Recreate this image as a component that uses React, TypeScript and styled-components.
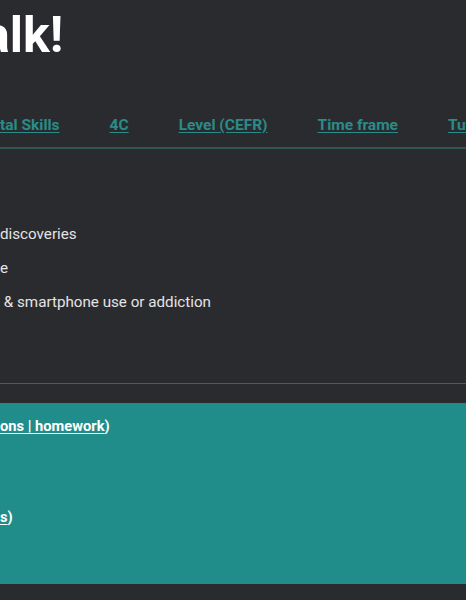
import React from "react";
import styled, { createGlobalStyle } from "styled-components";

const Global = createGlobalStyle`
  html, body { margin: 0; padding: 0; background: #2a2b2f; }
  body { font-family: Roboto, "Noto Sans", Arial, sans-serif; overflow: hidden; width: 466px; height: 600px; }
`;

const Page = styled.div`
  width: 466px;
  height: 600px;
  overflow: hidden;
  background: #2a2b2f;
  display: flex;
  flex-direction: column;
`;

const Title = styled.h1`
  margin: 0;
  padding-top: 7px;
  height: 60px;
  font-size: 50px;
  line-height: 56px;
  font-weight: 700;
  color: #ffffff;
  white-space: nowrap;
  text-indent: -17px;
`;

const Nav = styled.nav`
  display: flex;
  gap: 50px;
  margin-top: 42px;
  padding-top: 6px;
  height: 32px;
  white-space: nowrap;
  border-bottom: 2px solid #2d5755;
`;

const NavLink = styled.a`
  font-size: 15.5px;
  font-weight: 700;
  line-height: 20px;
  color: #2a8c88;
  text-decoration: underline;
  text-underline-offset: 2px;
  flex: none;
`;

const List = styled.ul`
  list-style: none;
  margin: 75px 0 0 0;
  padding: 0;
  display: flex;
  flex-direction: column;
  gap: 14px;
`;

const Item = styled.li<{ $indent: number }>`
  font-size: 15.2px;
  line-height: 20px;
  color: #e4e4e4;
  white-space: nowrap;
  text-indent: ${(p) => p.$indent}px;
`;

const Divider = styled.hr`
  margin: 71px 0 0 0;
  border: none;
  border-top: 1px solid #2f6a66;
  height: 0;
`;

const Panel = styled.section`
  margin-top: 19px;
  height: 181px;
  background: #218d8a;
  display: flex;
  flex-direction: column;
  gap: 71px;
  padding-top: 13px;
  box-sizing: border-box;
`;

const PanelLine = styled.div`
  font-size: 14.7px;
  line-height: 20px;
  font-weight: 700;
  color: #ffffff;
  white-space: nowrap;
`;

const PanelLink = styled.a`
  color: #ffffff;
  text-decoration: underline;
  text-underline-offset: 2px;
`;

export default function App() {
  return (
    <>
      <Global />
      <Page>
        <Title>alk!</Title>
        <Nav>
          <NavLink href="#">tal Skills</NavLink>
          <NavLink href="#">4C</NavLink>
          <NavLink href="#">Level (CEFR)</NavLink>
          <NavLink href="#">Time frame</NavLink>
          <NavLink href="#">Tutorial</NavLink>
        </Nav>
        <List>
          <Item $indent={0}>discoveries</Item>
          <Item $indent={0}>e</Item>
          <Item $indent={0}>&nbsp;&amp; smartphone use or addiction</Item>
        </List>
        <Divider />
        <Panel>
          <PanelLine>
            <PanelLink href="#">ons | homework</PanelLink>)
          </PanelLine>
          <PanelLine>
            <PanelLink href="#">s</PanelLink>)
          </PanelLine>
        </Panel>
      </Page>
    </>
  );
}
